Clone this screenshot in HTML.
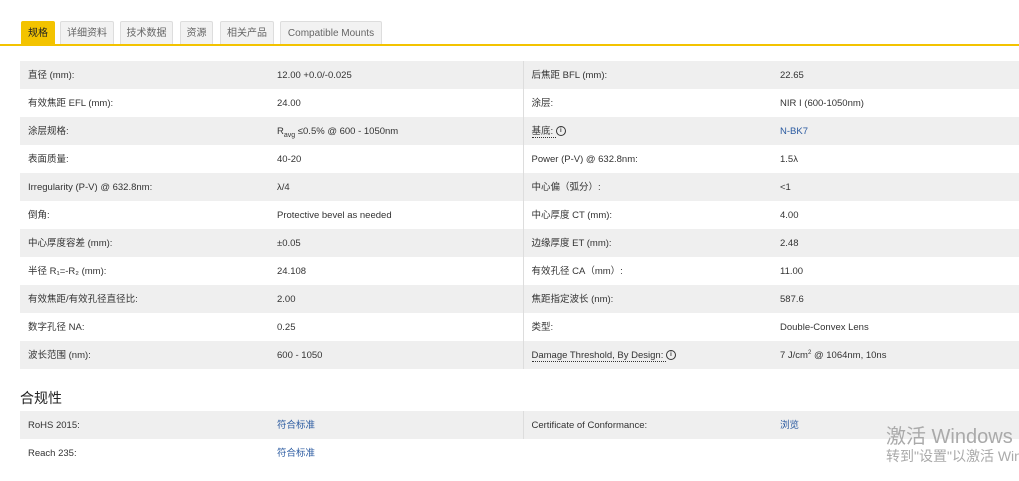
<!DOCTYPE html>
<html><head><meta charset="utf-8"><style>
body{margin:0;width:1019px;height:481px;overflow:hidden;background:#fff;font-family:"Liberation Sans","Noto Sans CJK SC",sans-serif;color:#333;font-size:9.5px;position:relative}
.tabs{position:absolute;left:0;top:0;width:1019px;height:46px;border-bottom:2px solid #f3c300;box-sizing:border-box}
.tab{position:absolute;top:21px;height:23px;line-height:23px;background:#f2f2f2;border:1px solid #ddd;border-bottom:none;box-sizing:border-box;text-align:center;font-size:10px;color:#666;border-radius:2px 2px 0 0}
.tab.on{background:#f3c300;color:#222;border-color:#f3c300}
table{position:absolute;left:20px;border-collapse:collapse;width:999px}
td{height:28px;padding:2px 0 0 8px;vertical-align:middle;box-sizing:border-box;line-height:12px}
tr.g td{background:#efefef}
td.c3{border-left:1px solid #ddd}
a{color:#2a5aa0;text-decoration:none}
.dot{border-bottom:1px dotted #333}
.i{display:inline-block;width:8px;height:8px;border:1px solid #333;border-radius:50%;font-size:6px;line-height:8px;text-align:center;font-weight:bold;vertical-align:middle}
sub,sup{line-height:0}
h3{position:absolute;left:20px;top:388px;margin:0;font-size:14px;font-weight:normal;color:#222}
.wm{position:absolute;left:886px;color:#aaa;white-space:nowrap}
</style></head><body>
<div class="tabs">
<div class="tab on" style="left:21px;width:34px">规格</div>
<div class="tab" style="left:60px;width:54px">详细资料</div>
<div class="tab" style="left:120px;width:53px">技术数据</div>
<div class="tab" style="left:180px;width:33px">资源</div>
<div class="tab" style="left:220px;width:54px">相关产品</div>
<div class="tab" style="left:280px;width:102px">Compatible Mounts</div>
</div>
<table style="top:61px">
<colgroup><col style="width:249px"><col style="width:254px"><col style="width:249px"><col></colgroup>
<tr class="g"><td>直径 (mm):</td><td>12.00 +0.0/-0.025</td><td class="c3">后焦距 BFL (mm):</td><td>22.65</td></tr>
<tr><td>有效焦距 EFL (mm):</td><td>24.00</td><td class="c3">涂层:</td><td>NIR I (600-1050nm)</td></tr>
<tr class="g"><td>涂层规格:</td><td>R<sub style="font-size:7px">avg</sub> ≤0.5% @ 600 - 1050nm</td><td class="c3"><span class="dot">基底: </span><span class="i">i</span></td><td><a>N-BK7</a></td></tr>
<tr><td>表面质量:</td><td>40-20</td><td class="c3">Power (P-V) @ 632.8nm:</td><td>1.5λ</td></tr>
<tr class="g"><td>Irregularity (P-V) @ 632.8nm:</td><td>λ/4</td><td class="c3">中心偏（弧分）:</td><td>&lt;1</td></tr>
<tr><td>倒角:</td><td>Protective bevel as needed</td><td class="c3">中心厚度 CT (mm):</td><td>4.00</td></tr>
<tr class="g"><td>中心厚度容差 (mm):</td><td>±0.05</td><td class="c3">边缘厚度 ET (mm):</td><td>2.48</td></tr>
<tr><td>半径 R₁=-R₂ (mm):</td><td>24.108</td><td class="c3">有效孔径 CA（mm）:</td><td>11.00</td></tr>
<tr class="g"><td>有效焦距/有效孔径直径比:</td><td>2.00</td><td class="c3">焦距指定波长 (nm):</td><td>587.6</td></tr>
<tr><td>数字孔径 NA:</td><td>0.25</td><td class="c3">类型:</td><td>Double-Convex Lens</td></tr>
<tr class="g"><td>波长范围 (nm):</td><td>600 - 1050</td><td class="c3"><span class="dot">Damage Threshold, By Design: </span><span class="i">i</span></td><td>7 J/cm<sup style="font-size:6px">2</sup> @ 1064nm, 10ns</td></tr>
</table>
<h3>合规性</h3>
<table style="top:411px">
<colgroup><col style="width:249px"><col style="width:254px"><col style="width:249px"><col></colgroup>
<tr class="g"><td>RoHS 2015:</td><td><a>符合标准</a></td><td class="c3">Certificate of Conformance:</td><td><a>浏览</a></td></tr>
<tr><td>Reach 235:</td><td><a>符合标准</a></td><td></td><td></td></tr>
</table>
<div class="wm" style="top:420px;font-size:20px">激活 Windows</div>
<div class="wm" style="top:446px;font-size:14px">转到"设置"以激活 Windows</div>
</body></html>
